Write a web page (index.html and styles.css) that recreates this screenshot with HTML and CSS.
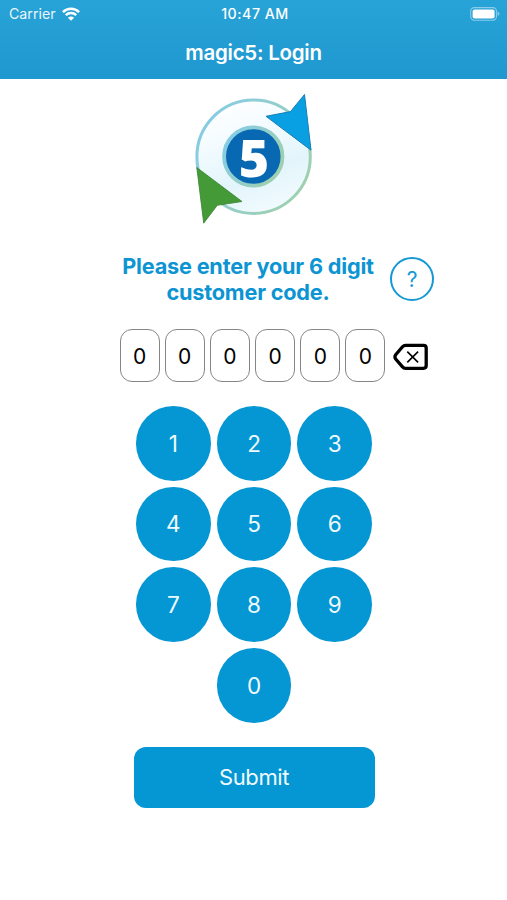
FILE: index.html
```html
<!DOCTYPE html>
<html lang="en">
<head>
<meta charset="utf-8">
<title>magic5: Login</title>
<link rel="stylesheet" href="styles.css">
</head>
<body>
<header class="header">
  <div class="status">
    <div class="carrier"><span>Carrier</span>
      <svg class="wifi" width="18" height="14" viewBox="0 0 18 14" fill="none" stroke="#fff" stroke-width="2.5"><path d="M.9 5.1C5.5.6 12.5.6 17.1 5.1M3.8 8.2c3-2.8 7.4-2.8 10.4 0"/><path d="M9 13.8 5.9 10.7c1.8-1.6 4.4-1.6 6.2 0z" fill="#fff" stroke="none"/></svg>
    </div>
    <span class="clock">10:47 AM</span>
    <svg class="battery" width="31" height="14" viewBox="0 0 31 14"><rect x=".7" y=".6" width="25.8" height="12.6" rx="3.6" fill="none" stroke="#8bcbea" stroke-width="1.1"/><rect x="2.6" y="2.4" width="22" height="9" rx="2" fill="#fff"/><path d="M27.7 4.8c2.3.7 2.3 3.5 0 4.2z" fill="#8bcbea"/></svg>
  </div>
  <h1 class="title">magic5: Login</h1>
</header>
<main class="login">
  <svg class="logo" width="140" height="150" viewBox="0 0 140 150">
    <defs>
      <linearGradient id="face" x1=".3" y1="0" x2=".7" y2="1"><stop offset="0" stop-color="#fff"/><stop offset=".25" stop-color="#f5fcff"/><stop offset=".65" stop-color="#e2f5fb"/><stop offset="1" stop-color="#f3fbfe"/></linearGradient>
      <linearGradient id="rim" x1="0" y1=".2" x2="1" y2=".8"><stop offset="0" stop-color="#84cce6"/><stop offset=".5" stop-color="#94ceca"/><stop offset="1" stop-color="#a0d0ab"/></linearGradient>
    </defs>
    <circle cx="68.6" cy="71.7" r="56.7" fill="url(#face)" stroke="url(#rim)" stroke-width="3"/>
    <circle cx="68.3" cy="71.5" r="29.2" fill="#0869b2" stroke="url(#rim)" stroke-width="3.8"/>
    <text class="logo-digit" x="69" y="91.6" text-anchor="middle">5</text>
    <path d="M81 31.3 105.5 26.6 119.5 9.5 126 65.2Z" fill="#08a0e3" stroke="#197fb4" stroke-width="1"/>
    <path d="M11.8 82.5 57 116.5 32.3 120.3 18.7 138.2Z" fill="#459a38" stroke="#398334" stroke-width=".8"/>
  </svg>
  <div class="prompt">
    <p class="message">Please enter your 6 digit<br>customer code.</p>
    <button class="help">?</button>
  </div>
  <div class="code">
    <span class="cell">0</span><span class="cell">0</span><span class="cell">0</span><span class="cell">0</span><span class="cell">0</span><span class="cell">0</span>
    <button class="erase" aria-label="Delete"><svg width="36" height="28" viewBox="0 0 36 28" fill="none" stroke="#000"><path d="M12.5 2.3H30.5Q33.2 2.3 33.2 5V22.6Q33.2 25.3 30.5 25.3H12.5Q10.8 25.3 9.5 23.8L2.7 16Q1.2 13.9 2.7 11.8L9.5 3.8Q10.8 2.3 12.5 2.3Z" stroke-width="3.3"/><path d="m14.3 8.6 10.8 10.8m0-10.8L14.3 19.4" stroke-width="1.6"/></svg></button>
  </div>
  <div class="keypad">
    <button class="key">1</button><button class="key">2</button><button class="key">3</button>
    <button class="key">4</button><button class="key">5</button><button class="key">6</button>
    <button class="key">7</button><button class="key">8</button><button class="key">9</button>
    <button class="key zero">0</button>
  </div>
  <button class="submit">Submit</button>
</main>
</body>
</html>
```
FILE: styles.css
```css
* { box-sizing: border-box; }
body { margin: 0; height: 900px; overflow: hidden; background: #fff; font-family: Inter, "Liberation Sans", sans-serif; }
button { padding: 0; border: 0; background: none; font: inherit; color: inherit; }
svg { display: block; }
.header { height: 79px; background: linear-gradient(#28a3d7, #1e98cf); color: #fff; }
.status { height: 27px; padding: 0 6px 0 9px; display: grid; grid-template-columns: 1fr auto 1fr; align-items: center; line-height: 27px; }
.carrier { display: flex; align-items: center; gap: 6px; font-size: 14.2px; line-height: 26px; color: #e9f6fc; }
.wifi { margin-top: -1px; }
.clock { font-size: 14.2px; font-weight: 500; letter-spacing: .5px; line-height: 28px; }
.battery { justify-self: end; }
.title { margin: 0; text-align: center; font-size: 20.5px; letter-spacing: -.25px; line-height: 52px; font-weight: 600; }
.login { display: flex; flex-direction: column; align-items: center; }
.logo { margin: 6px 0 0 3px; }
.logo-digit { font: 800 52px "Open Sans", sans-serif; fill: #fff; }
.prompt { display: flex; align-items: center; gap: 14px; margin: 17px 0 0 47px; height: 53px; width: 314px; }
.message { flex: 0 0 256px; margin: 0; text-align: center; white-space: nowrap; color: #0d94d2; font-size: 21.7px; line-height: 26px; font-weight: 700; letter-spacing: -.2px; }
.help { width: 44px; height: 44px; padding-top: 2px; border: 2px solid #1598d3; border-radius: 50%; color: #1598d3; font-size: 21px; }
.code { display: flex; align-items: center; gap: 5.2px; width: 310px; margin: 24px 0 0 42px; }
.cell { flex: 0 0 40px; height: 53px; padding-top: 1px; border: 1px solid #858585; border-radius: 12px; display: grid; place-items: center; font-size: 21px; }
.erase { margin: 2px 0 0 2px; }
.keypad { display: grid; grid-template-columns: repeat(3, 74.6px); grid-auto-rows: 74.6px; gap: 6.1px; margin: 24px 0 0 1px; }
.key { border-radius: 50%; background: #0596d4; color: #effaff; font-size: 22.5px; }
.zero { grid-column: 2; }
.submit { width: 241px; height: 61px; margin: 24px 0 0 1px; border-radius: 12px; background: #0596d4; color: #effaff; font-size: 22px; letter-spacing: -.4px; }
```
